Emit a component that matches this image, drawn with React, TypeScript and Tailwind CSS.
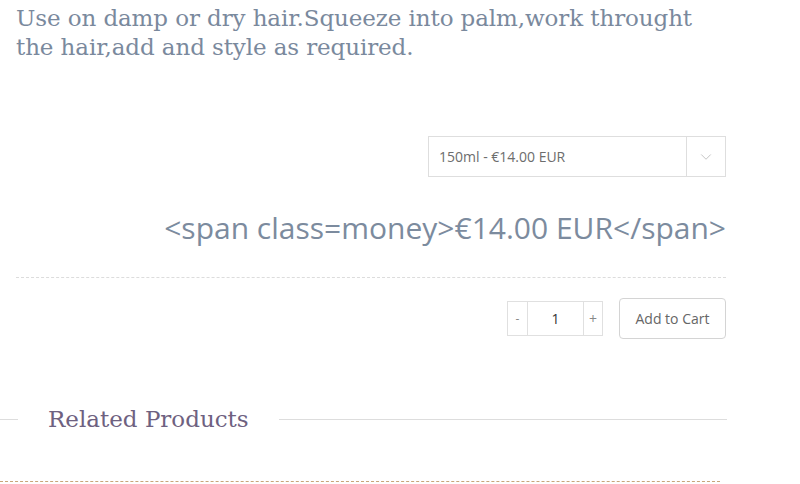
import { ChevronDown } from "lucide-react";

const serif = { fontFamily: '"DejaVu Serif", "Liberation Serif", serif' };

export default function App() {
  return (
    <div className="h-[484px] w-[800px] overflow-hidden bg-white" style={{ fontFamily: '"Open Sans", "Noto Sans", sans-serif' }}>
      <div className="w-[726px] pl-4">
        <p className="pt-[4px] text-[23px] leading-[29px] tracking-[-0.1px] text-[#7a899d]" style={serif}>
          Use on damp or dry hair.Squeeze into palm,work throught the hair,add and style as required.
        </p>

        <div className="mt-[74px] flex justify-end">
          <div className="flex h-[41px] w-[298px] border border-[#dedede]">
            <div className="flex flex-1 items-center pl-[10px] text-[14px] text-[#6d6d6d]">150ml - €14.00 EUR</div>
            <div className="flex w-[39px] items-center justify-center border-l border-[#dedede]">
              <ChevronDown size={18} strokeWidth={1} className="text-[#b0b0b0]" />
            </div>
          </div>
        </div>

        <div className="mt-[31px] text-right text-[30px] leading-[40px] text-[#7c8b9e]">
          &lt;span class=money&gt;€14.00 EUR&lt;/span&gt;
        </div>

        <div className="mt-[29px] border-t border-dashed border-[#dcdcdc]" />

        <div className="mt-[20px] flex items-center justify-end gap-[16px]">
          <div className="flex h-[35px] border border-[#e0e0e0] text-[#555]">
            <div className="flex w-[19px] items-center justify-center text-[12px] text-[#888]">-</div>
            <div className="flex w-[57px] items-center justify-center border-x border-[#e0e0e0] text-[14px] text-[#333]">1</div>
            <div className="flex w-[18px] items-center justify-center text-[14px] text-[#888]">+</div>
          </div>
          <button className="h-[41px] w-[107px] rounded-[4px] border border-[#d4d4d4] bg-white text-[14px] text-[#666]">
            Add to Cart
          </button>
        </div>
      </div>

      <div className="mt-[65px] flex w-[727px] items-center">
        <div className="h-px w-[18px] bg-[#dddddd]" />
        <h2 className="px-[30px] text-[23px] leading-[30px] text-[#6e6180]" style={serif}>
          Related Products
        </h2>
        <div className="h-px flex-1 bg-[#dddddd]" />
      </div>

      <div className="mt-[47px] w-[720px] border-t border-dashed border-[#c8a67a]" />
    </div>
  );
}
